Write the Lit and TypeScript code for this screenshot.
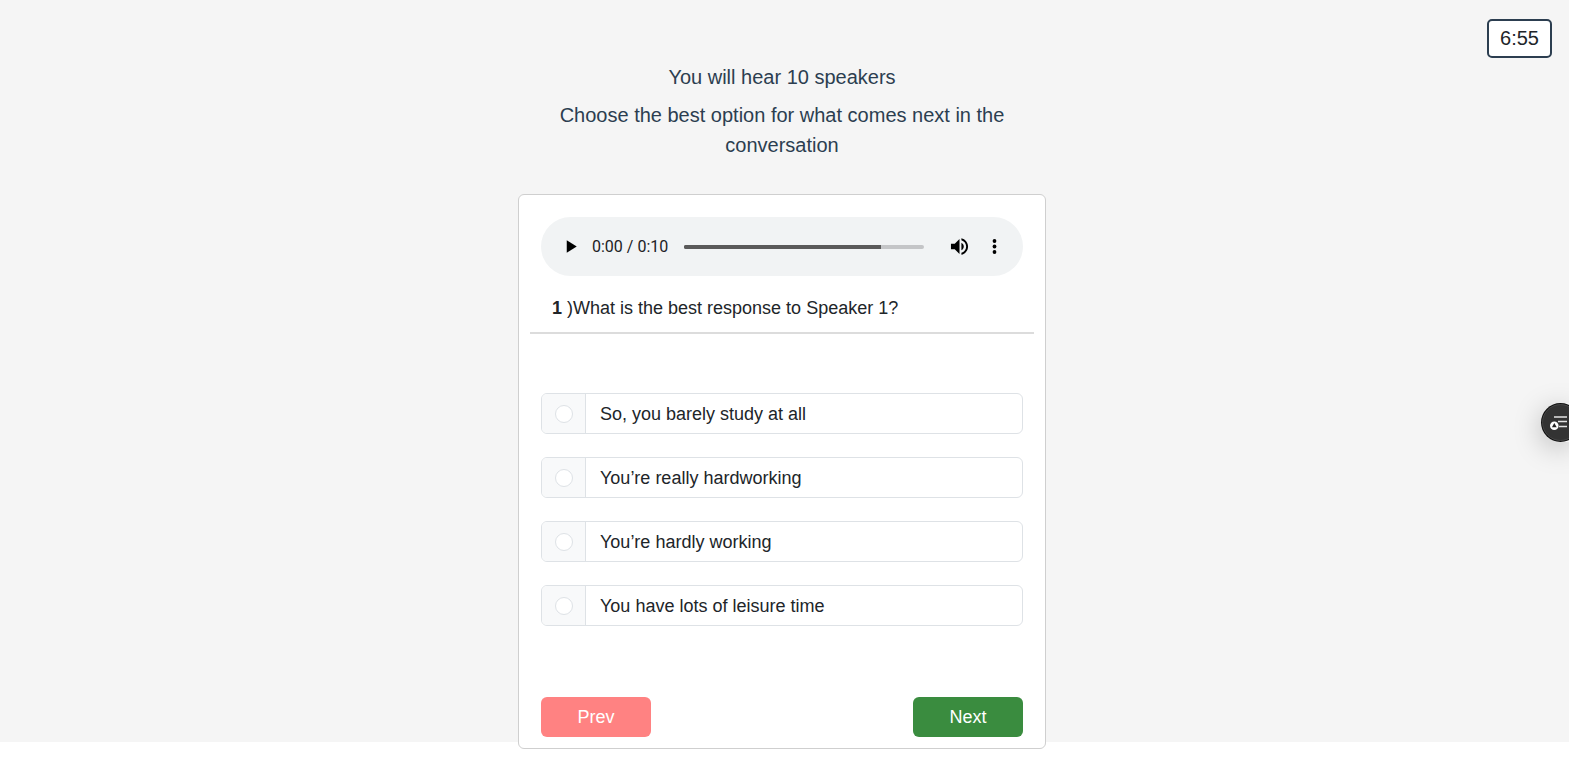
import { LitElement, html, css } from "lit";
import { customElement, state } from "lit/decorators.js";

@customElement("audio-bar")
class AudioBar extends LitElement {
  static styles = css`
    :host {
      display: block;
    }
    .bar {
      display: flex;
      align-items: center;
      box-sizing: border-box;
      height: 59px;
      padding: 0 17px 0 18px;
      border-radius: 30px;
      background: #f1f3f4;
      font-family: Roboto, sans-serif;
      font-size: 16px;
      color: #202124;
    }
    .icon {
      display: grid;
      place-items: center;
      width: 24px;
      height: 24px;
      padding: 0;
      border: 0;
      background: none;
      cursor: pointer;
    }
    .icon svg {
      width: 19px;
      height: 19px;
    }
    .time {
      margin-left: 9px;
      white-space: nowrap;
    }
    .track {
      appearance: none;
      flex: 1;
      min-width: 40px;
      height: 4px;
      margin: 0 23px 0 16px;
      border-radius: 2px;
      background: linear-gradient(to right, #5a5a5a 82%, #c4c5c7 82%);
      cursor: pointer;
    }
    .track::-webkit-slider-thumb {
      appearance: none;
      width: 4px;
      height: 4px;
      border-radius: 2px;
      background: #5a5a5a;
    }
    .more {
      margin-left: 11px;
    }
  `;

  render() {
    return html`
      <div class="bar">
        <button class="icon" aria-label="Play">
          <svg viewBox="0 0 20 20"><path d="M5 3.5v13l10.5-6.5z" /></svg>
        </button>
        <span class="time">0:00 / 0:10</span>
        <input class="track" type="range" min="0" max="10" value="0" aria-label="Seek" />
        <button class="icon" aria-label="Mute">
          <svg viewBox="2 2 20 20">
            <path
              d="M3 9v6h4l5 5V4L7 9H3zm13.5 3c0-1.77-1.02-3.29-2.5-4.03v8.05c1.48-.73 2.5-2.25 2.5-4.02zM14 3.23v2.06c2.89.86 5 3.54 5 6.71s-2.11 5.85-5 6.71v2.06c4.01-.91 7-4.49 7-8.77s-2.99-7.86-7-8.77z"
            />
          </svg>
        </button>
        <button class="icon more" aria-label="More options">
          <svg viewBox="0 0 20 20">
            <circle cx="10" cy="4.2" r="2" />
            <circle cx="10" cy="10" r="2" />
            <circle cx="10" cy="15.8" r="2" />
          </svg>
        </button>
      </div>
    `;
  }
}

@customElement("app-root")
class AppRoot extends LitElement {
  @state() private answer = -1;

  private options = [
    "So, you barely study at all",
    "You’re really hardworking",
    "You’re hardly working",
    "You have lots of leisure time",
  ];

  static styles = css`
    :host {
      display: block;
      font-family: "Liberation Sans", Arial, sans-serif;
      font-size: 18px;
      color: #212529;
    }
    .page {
      display: grid;
      grid-template-columns: minmax(0, 1fr) minmax(0, 528px) minmax(0, 1fr);
      padding-right: 5px;
      margin-bottom: 41px;
      background: #f5f5f5;
    }
    .main {
      grid-column: 2;
      padding-top: 62px;
      margin-bottom: -7px;
    }
    .intro {
      padding: 0 40px;
      margin-bottom: 34px;
      text-align: center;
      font-size: 20px;
      line-height: 30px;
      color: #2c3e50;
    }
    .intro p {
      margin: 0 0 8px;
    }
    .intro p:last-child {
      margin: 0;
    }
    .timer {
      justify-self: end;
      align-self: start;
      margin: 19px 12px 0 0;
      padding: 0 11px;
      border: 2px solid #2c3e50;
      border-radius: 5px;
      background: #fff;
      font-size: 20px;
      line-height: 35px;
    }
    .card {
      padding: 22px 11px 11px;
      border: 1px solid #cfcfcf;
      border-radius: 6px;
      background: #fff;
    }
    .player {
      margin: 0 11px;
    }
    .question {
      margin: 0;
      padding: 19px 22px 10px;
      border-bottom: 2px solid #dcdcdc;
      font-size: 18px;
      font-weight: 400;
      line-height: 27px;
    }
    .options {
      display: grid;
      gap: 23px;
      margin: 59px 11px 0;
      padding: 0;
      border: 0;
    }
    .option {
      display: flex;
      box-sizing: border-box;
      min-height: 41px;
      border: 1px solid #dee2e6;
      border-radius: 6px;
      overflow: hidden;
      cursor: pointer;
    }
    .mark {
      display: grid;
      place-items: center;
      width: 43px;
      border-right: 1px solid #dee2e6;
      background: #f8f9fa;
    }
    .radio {
      appearance: none;
      box-sizing: border-box;
      width: 18px;
      height: 18px;
      margin: 0;
      border: 1px solid #dee2e6;
      border-radius: 50%;
      background: #fff;
    }
    .radio:checked {
      border: 5px solid #0d6efd;
    }
    .label {
      padding: 7px 14px 5px;
      line-height: 27px;
    }
    .actions {
      display: flex;
      justify-content: space-between;
      margin: 71px 11px 0;
    }
    .btn {
      width: 110px;
      height: 40px;
      border: 0;
      border-radius: 6px;
      font: inherit;
      color: #fff;
      cursor: pointer;
    }
    .prev {
      background: #ff8282;
    }
    .next {
      background: #3a8c3f;
    }
    .float {
      position: fixed;
      top: 403px;
      right: 0;
      width: 28px;
      height: 39px;
      padding: 0;
      border: 0;
      border-radius: 20px 0 0 20px;
      background: none;
      box-shadow: 0 6px 28px rgba(0, 0, 0, 0.25);
      cursor: pointer;
    }
    .float svg {
      display: block;
    }
  `;

  render() {
    return html`
      <div class="page">
        <main class="main">
          <header class="intro">
            <p>You will hear 10 speakers</p>
            <p>Choose the best option for what comes next in the conversation</p>
          </header>
          <section class="card">
            <audio-bar class="player"></audio-bar>
            <h2 class="question"><b>1</b> )What is the best response to Speaker 1?</h2>
            <fieldset class="options" aria-label="Answers">
              ${this.options.map(
                (text, i) => html`
                  <label class="option">
                    <span class="mark">
                      <input
                        class="radio"
                        type="radio"
                        name="answer"
                        .checked=${this.answer === i}
                        @change=${() => (this.answer = i)}
                      />
                    </span>
                    <span class="label">${text}</span>
                  </label>
                `
              )}
            </fieldset>
            <div class="actions">
              <button class="btn prev">Prev</button>
              <button class="btn next">Next</button>
            </div>
          </section>
        </main>
        <div class="timer" role="timer">6:55</div>
      </div>
      <button class="float" aria-label="Accessibility menu">
        <svg width="28" height="39" viewBox="0 0 28 39">
          <circle cx="19.5" cy="19.5" r="19.5" fill="#111" />
          <circle cx="19.5" cy="19.5" r="18" fill="#333" stroke="#555" stroke-width="0.7" />
          <path d="M13 14h13M17 18.5h9M18 23.5h8" stroke="#e4e4e4" stroke-width="1.6" fill="none" />
          <circle cx="13.3" cy="22.7" r="4.3" fill="#fff" />
          <path d="M13.3 20l2.4 4.2h-4.8z" fill="#222" />
        </svg>
      </button>
    `;
  }
}
